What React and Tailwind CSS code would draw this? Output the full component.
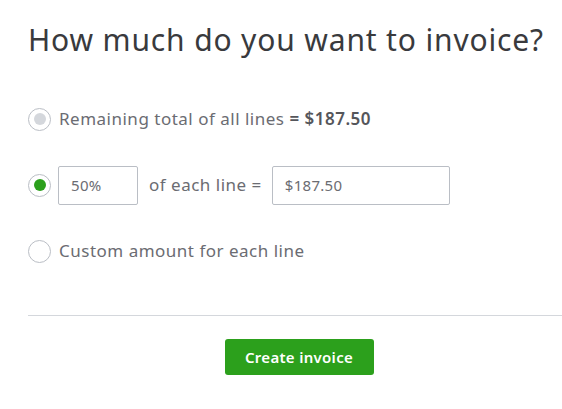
import { useState } from "react";

function Radio({ checked, muted }) {
  return (
    <span className="w-[23px] h-[23px] rounded-full border border-[#babec5] bg-white flex items-center justify-center shrink-0">
      {checked && <span className="w-[12px] h-[12px] rounded-full bg-[#2ca01c]" />}
      {muted && <span className="w-[12px] h-[12px] rounded-full bg-[#d4d7dc]" />}
    </span>
  );
}

export default function App() {
  const [pct, setPct] = useState("50%");
  const [amount, setAmount] = useState("$187.50");

  return (
    <div className="w-[562px] h-[409px] bg-white overflow-hidden font-['Noto_Sans','Open_Sans',sans-serif]">
      <div className="w-[542px] ml-[28px] pt-[20px]">
        <h1 className="text-[30px] leading-[40px] tracking-[0.85px] text-[#393a3d]">
          How much do you want to invoice?
        </h1>

        <div className="mt-[39px] flex flex-col">
          <label className="h-[40px] flex items-center gap-[8px] text-[17px] tracking-[0.5px] text-[#6b6c72]">
            <Radio muted />
            <span>
              Remaining total of all lines <span className="font-semibold text-[#55565b]">= $187.50</span>
            </span>
          </label>

          <div className="mt-[26px] h-[40px] flex items-center text-[17px] tracking-[0.5px] text-[#6b6c72]">
            <Radio checked />
            <input
              value={pct}
              onChange={(e) => setPct(e.target.value)}
              className="ml-[7px] w-[80px] h-[39px] border border-[#babec5] rounded-[2px] px-[12px] text-[15px] tracking-[0.3px] text-[#6b6c72] outline-none"
            />
            <span className="ml-[11px]">of each line =</span>
            <input
              value={amount}
              onChange={(e) => setAmount(e.target.value)}
              className="ml-[10px] w-[178px] h-[39px] border border-[#babec5] rounded-[2px] px-[12px] text-[15px] tracking-[0.3px] text-[#6b6c72] outline-none"
            />
          </div>

          <label className="mt-[26px] h-[40px] flex items-center gap-[8px] text-[17px] tracking-[0.5px] text-[#6b6c72]">
            <Radio />
            <span>Custom amount for each line</span>
          </label>
        </div>

        <div className="mt-[44px] border-t border-[#d4d7dc]" />

        <div className="mt-[23px] flex justify-center">
          <button className="w-[149px] h-[36px] rounded-[3px] bg-[#2ca01c] text-white text-[15px] font-semibold tracking-[0.3px]">
            Create invoice
          </button>
        </div>
      </div>
    </div>
  );
}
